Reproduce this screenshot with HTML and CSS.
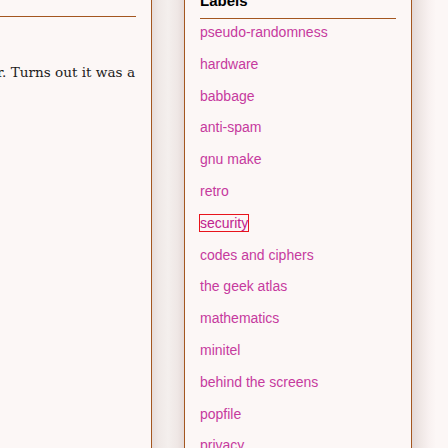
FILE: index.html
```html
<!DOCTYPE html>
<html lang="en">
<head>
<meta charset="utf-8">
<title>Blog</title>
<link rel="stylesheet" href="styles.css">
</head>
<body>
<div class="page">
  <main class="main">
    <div class="main-rule"></div>
    <p class="post-text"><span class="post-line">a problem with the computer. Turns out it was a</span></p>
  </main>
  <div class="gutter"></div>
  <aside class="sidebar">
    <h2 class="sidebar-title">Labels</h2>
    <div class="sidebar-rule"></div>
    <ul class="labels">
      <li><a href="#">pseudo-randomness</a></li>
      <li><a href="#">hardware</a></li>
      <li><a href="#">babbage</a></li>
      <li><a href="#">anti-spam</a></li>
      <li><a href="#">gnu make</a></li>
      <li><a href="#">retro</a></li>
      <li><a href="#" class="focused">security</a></li>
      <li><a href="#">codes and ciphers</a></li>
      <li><a href="#">the geek atlas</a></li>
      <li><a href="#">mathematics</a></li>
      <li><a href="#">minitel</a></li>
      <li><a href="#">behind the screens</a></li>
      <li><a href="#">popfile</a></li>
      <li><a href="#">privacy</a></li>
    </ul>
  </aside>
  <div class="shade"></div>
</div>
</body>
</html>
```

FILE: styles.css
```css
html, body {
  margin: 0;
  padding: 0;
  background: #fcf7f6;
  overflow: hidden;
  height: 448px;
}

.page {
  display: flex;
  height: 448px;
  overflow: hidden;
}

.main {
  width: 136px;
  padding-right: 15px;
  border-right: 1px solid #a3561f;
  overflow: hidden;
  flex: none;
}

.main-rule {
  margin-top: 16px;
  border-top: 1px solid #a3561f;
}

.post-text {
  direction: rtl;
  text-align: right;
  white-space: nowrap;
  margin: 43px 1px 0 0;
  font-family: "DejaVu Serif", serif;
  font-size: 13.6px;
  line-height: 24px;
  color: #1c1c1c;
}

.post-line {
  direction: ltr;
  unicode-bidi: isolate;
}

.gutter {
  width: 32px;
  flex: none;
  background: linear-gradient(to right, #e7dddb 0%, #efe8e6 20%, #f4efed 50%, #efe7e5 80%, #e5dad8 100%);
}

.sidebar {
  width: 196px;
  padding: 0 15px;
  border-left: 1px solid #a3561f;
  border-right: 1px solid #a3561f;
  background: #fcf7f6;
  flex: none;
  font-family: "Liberation Sans", Arial, sans-serif;
}

.sidebar-title {
  margin: -8px 0 0 0;
  font-size: 15px;
  line-height: 18px;
  font-weight: bold;
  color: #000;
}

.sidebar-rule {
  margin-top: 8px;
  border-top: 1px solid #a3561f;
}

.labels {
  list-style: none;
  margin: 0;
  padding: 0;
}

.labels li {
  padding: 6px 0 10px 0;
  font-size: 14px;
  line-height: 15.8px;
}

.labels a {
  color: #c63a9e;
  text-decoration: none;
}

.labels a.focused {
  color: #c0238f;
  outline: 1px solid #e8141c;
}

.shade {
  width: 24px;
  flex: none;
  background: linear-gradient(to right, #e4d9d7 0%, #efe7e5 35%, #f8f1f0 70%, #fcf7f6 100%);
}
```
